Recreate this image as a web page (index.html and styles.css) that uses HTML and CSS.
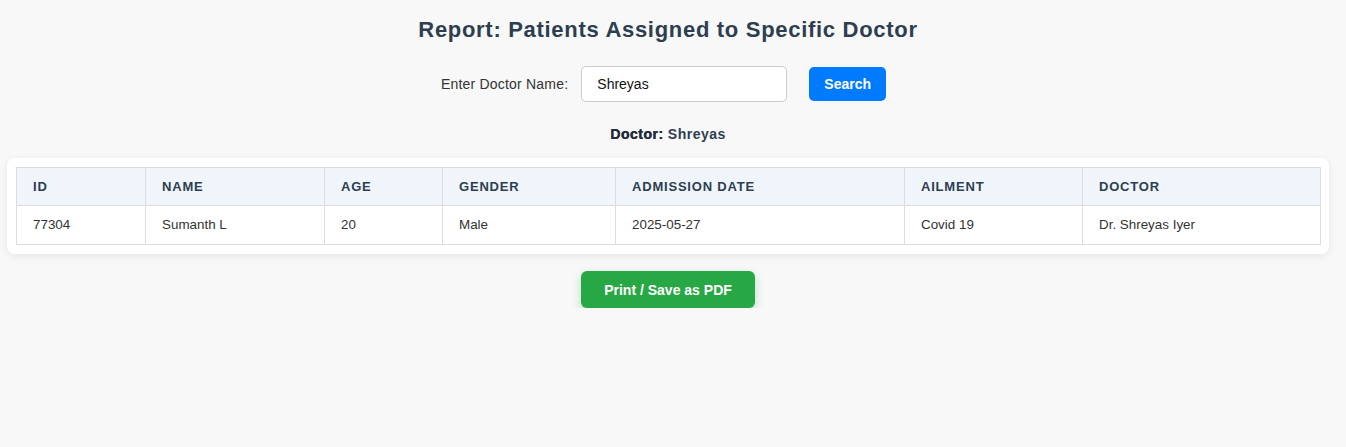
FILE: index.html
```html
<!DOCTYPE html>
<html>
<head>
<meta charset="utf-8">
<link rel="stylesheet" href="styles.css">
</head>
<body>
<div class="page">
  <h1 class="title">Report: Patients Assigned to Specific Doctor</h1>
  <form class="search-row">
    <label class="search-label" for="doc">Enter Doctor Name:</label>
    <input class="search-input" id="doc" type="text" value="Shreyas">
    <button class="search-btn" type="button">Search</button>
  </form>
  <p class="doctor-line"><strong class="doctor-key">Doctor:</strong> Shreyas</p>
  <div class="card">
    <table class="report">
      <colgroup>
        <col class="c-id"><col class="c-name"><col class="c-age"><col class="c-gender"><col class="c-date"><col class="c-ail"><col class="c-doc">
      </colgroup>
      <thead>
        <tr><th>ID</th><th>Name</th><th>Age</th><th>Gender</th><th>Admission Date</th><th>Ailment</th><th>Doctor</th></tr>
      </thead>
      <tbody>
        <tr><td>77304</td><td>Sumanth L</td><td>20</td><td>Male</td><td>2025-05-27</td><td>Covid 19</td><td>Dr. Shreyas Iyer</td></tr>
      </tbody>
    </table>
  </div>
  <div class="actions">
    <button class="print-btn" type="button">Print / Save as PDF</button>
  </div>
</div>
</body>
</html>
```
FILE: styles.css
```css
html, body {
  margin: 0;
  padding: 0;
  background: #f8f8f8;
  font-family: "Liberation Sans", Arial, sans-serif;
  color: #333;
}
.page {
  padding: 17px 17px 0 7px;
}
.title {
  margin: 0;
  text-align: center;
  font-size: 22px;
  line-height: 25px;
  font-weight: 700;
  letter-spacing: 0.7px;
  color: #2c3e50;
}
.search-row {
  margin: 24px 0 0;
  display: flex;
  justify-content: center;
  align-items: center;
}
.search-label {
  font-size: 14px;
  letter-spacing: 0.2px;
  color: #333;
  margin-right: 13px;
}
.search-input {
  box-sizing: border-box;
  width: 206px;
  height: 36px;
  padding: 0 15px;
  border: 1px solid #ccc;
  border-radius: 5px;
  background: #fff;
  font-family: "Liberation Sans", Arial, sans-serif;
  font-size: 14px;
  color: #111;
  margin-right: 22px;
}
.search-btn {
  box-sizing: border-box;
  height: 34px;
  padding: 0 15px;
  margin-right: 9px;
  border: none;
  border-radius: 5px;
  background: #007bff;
  color: #fff;
  font-family: "Liberation Sans", Arial, sans-serif;
  font-weight: 700;
  font-size: 14px;
}
.doctor-line {
  margin: 24px 0 0;
  text-align: center;
  font-size: 14px;
  line-height: 16px;
  font-weight: 700;
  letter-spacing: 0.5px;
  color: #2c3e50;
}
.doctor-key {
  color: #1f2d3a;
  text-shadow: 0.4px 0 0 #1f2d3a;
}
.card {
  margin-top: 16px;
  background: #fff;
  border-radius: 8px;
  padding: 9px;
  box-shadow: 0 2px 8px rgba(0, 0, 0, 0.08);
}
.report {
  width: 100%;
  border-collapse: collapse;
  table-layout: fixed;
}
.c-id { width: 129px; }
.c-name { width: 179px; }
.c-age { width: 118px; }
.c-gender { width: 173px; }
.c-date { width: 289px; }
.c-ail { width: 178px; }
.c-doc { width: 238px; }
.report th,
.report td {
  border: 1px solid #ddd;
  text-align: left;
  padding: 11px 16px;
}
.report th {
  background: #f0f4fb;
  color: #2c3e50;
  font-size: 13px;
  line-height: 15px;
  font-weight: 700;
  text-transform: uppercase;
  letter-spacing: 0.8px;
}
.report td {
  font-size: 13.4px;
  line-height: 16px;
  color: #333;
}
.actions {
  margin-top: 17px;
  display: flex;
  justify-content: center;
}
.print-btn {
  box-sizing: border-box;
  height: 37px;
  padding: 0 23px;
  border: none;
  border-radius: 6px;
  background: #28a745;
  color: #fff;
  font-family: "Liberation Sans", Arial, sans-serif;
  font-weight: 700;
  font-size: 14px;
  box-shadow: 0 4px 10px rgba(40, 167, 69, 0.3);
}
```
